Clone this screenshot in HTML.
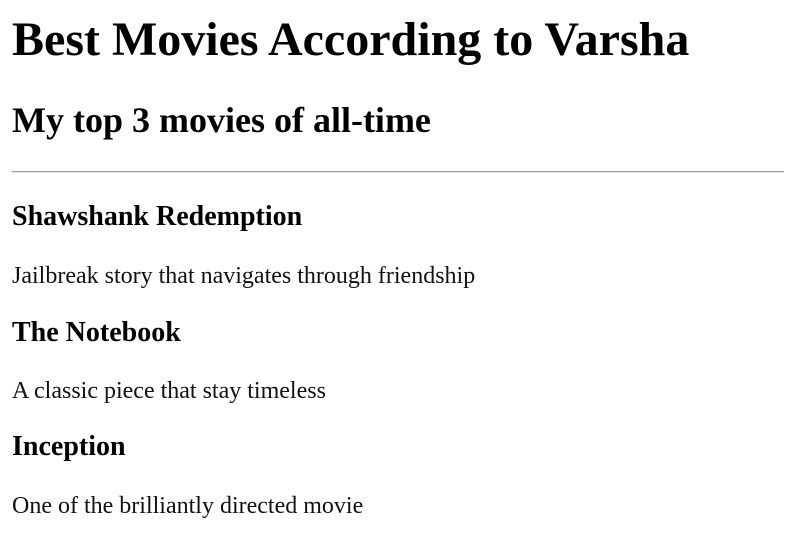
<!DOCTYPE html>
<html><head><meta charset="utf-8"><style>
html,body{margin:0;background:#fff;width:795px;height:547px;overflow:hidden}
body{position:relative;font-family:"Liberation Serif",serif;color:#000}
.t{position:absolute;left:12px;margin:0;line-height:1;white-space:nowrap}
.h1{font-size:48px;font-weight:bold}
.h2{font-size:36px;font-weight:bold}
.h3{font-size:28px;font-weight:bold}
.p{font-size:24px;color:#111}
.hr{position:absolute;left:12px;width:772px;top:171px;height:1px;background:#9a9a9a;border-bottom:1px solid #e6e6e6}
</style></head><body>
<div class="t h1" style="top:16px">Best Movies According to Varsha</div>
<div class="t h2" style="top:102px">My top 3 movies of all-time</div>
<div class="hr"></div>
<div class="t h3" style="top:202.5px">Shawshank Redemption</div>
<div class="t p" style="top:263.5px">Jailbreak story that navigates through friendship</div>
<div class="t h3" style="top:318.5px">The Notebook</div>
<div class="t p" style="top:378.5px">A classic piece that stay timeless</div>
<div class="t h3" style="top:432.5px">Inception</div>
<div class="t p" style="top:493.5px">One of the brilliantly directed movie</div>
</body></html>
